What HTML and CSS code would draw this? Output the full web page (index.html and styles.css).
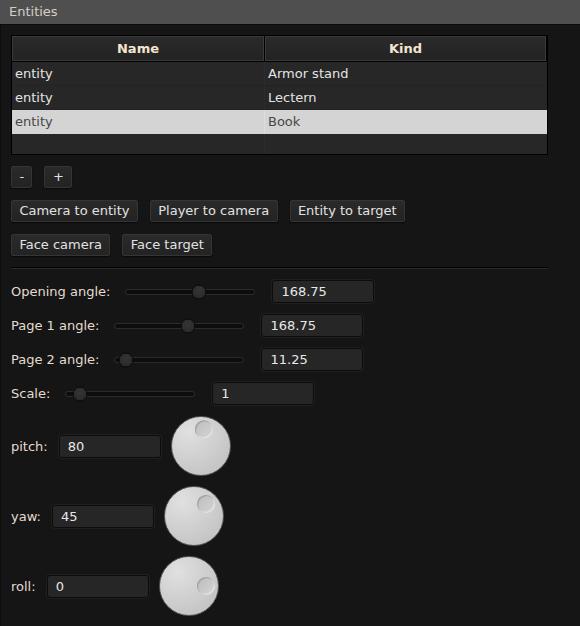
FILE: index.html
```html
<!DOCTYPE html>
<html>
<head>
<meta charset="utf-8">
<link rel="stylesheet" href="styles.css">
</head>
<body>
<div class="window">
  <div class="title">Entities</div>
  <div class="content">
    <div class="table">
      <div class="thead">
        <div class="th name">Name</div>
        <div class="th kind">Kind</div>
      </div>
      <div class="tbody">
        <div class="tr"><div class="td c1">entity</div><div class="td c2">Armor stand</div></div>
        <div class="tr"><div class="td c1">entity</div><div class="td c2">Lectern</div></div>
        <div class="tr sel"><div class="td c1">entity</div><div class="td c2">Book</div></div>
        <div class="tr"><div class="td c1"></div><div class="td c2"></div></div>
      </div>
    </div>

    <div class="btnrow first">
      <button class="btn">-</button>
      <button class="btn">+</button>
    </div>
    <div class="btnrow">
      <button class="btn">Camera to entity</button>
      <button class="btn">Player to camera</button>
      <button class="btn">Entity to target</button>
    </div>
    <div class="btnrow">
      <button class="btn">Face camera</button>
      <button class="btn">Face target</button>
    </div>

    <div class="sep"></div>

    <div class="srow first">
      <span class="lbl">Opening angle:</span>
      <div class="slider"><div class="track"><div class="thumb" style="left:56.6%"></div></div></div>
      <div class="tb">168.75</div>
    </div>
    <div class="srow">
      <span class="lbl">Page 1 angle:</span>
      <div class="slider"><div class="track"><div class="thumb" style="left:56.3%"></div></div></div>
      <div class="tb">168.75</div>
    </div>
    <div class="srow">
      <span class="lbl">Page 2 angle:</span>
      <div class="slider"><div class="track"><div class="thumb" style="left:8.6%"></div></div></div>
      <div class="tb">11.25</div>
    </div>
    <div class="srow">
      <span class="lbl">Scale:</span>
      <div class="slider"><div class="track"><div class="thumb" style="left:10.9%"></div></div></div>
      <div class="tb">1</div>
    </div>

    <div class="krow first">
      <span class="lbl">pitch:</span>
      <div class="tb">80</div>
      <div class="knob"><div class="dot" style="--a:-80deg"></div></div>
    </div>
    <div class="krow">
      <span class="lbl">yaw:</span>
      <div class="tb">45</div>
      <div class="knob"><div class="dot" style="--a:-45deg"></div></div>
    </div>
    <div class="krow">
      <span class="lbl">roll:</span>
      <div class="tb">0</div>
      <div class="knob"><div class="dot" style="--a:0deg"></div></div>
    </div>
  </div>
</div>
</body>
</html>
```

FILE: styles.css
```css
html, body {
  margin: 0;
  padding: 0;
  background: #151515;
  overflow: hidden;
}

body {
  font-family: "DejaVu Sans", "Liberation Sans", sans-serif;
  font-size: 13px;
}

.window {
  width: 580px;
  height: 626px;
  background: #151515;
}

.title {
  height: 24px;
  line-height: 24px;
  padding-left: 9px;
  background: #4f4f4f;
  color: #d6cfc6;
  border-bottom: 1px solid #0b0b0b;
}

.content {
  height: 601px;
  box-sizing: border-box;
  padding: 10px 0 0 10px;
  border-left: 1px solid #0c0c0c;
}

/* table */
.table {
  width: 537px;
  box-sizing: border-box;
  border: 1px solid #000;
  background: #272727;
}

.thead {
  display: flex;
  gap: 1px;
  padding: 0 1px 1px 0;
  background: #000;
}

.th {
  height: 25px;
  box-sizing: border-box;
  border: 1px solid #3a3a3a;
  background: linear-gradient(#2a2a2a, #232323);
  color: #f3e5d0;
  font-weight: bold;
  text-align: center;
  line-height: 23px;
}

.th.name { width: 252px; }
.th.kind { flex: 1; }

.tbody {
  height: 92px;
  overflow: hidden;
}

.tr {
  display: flex;
  height: 24px;
  box-sizing: border-box;
  border-bottom: 1px solid #232323;
  background: #272727;
  color: #e4e4e4;
}

.td {
  line-height: 23px;
  padding-left: 3px;
  box-sizing: border-box;
}

.c1 {
  width: 253px;
  border-right: 1px solid #2c2c2c;
}

.c2 { flex: 1; }

.tr.sel {
  background: #d4d4d4;
  color: #474747;
  border-bottom-color: #d4d4d4;
}

.tr.sel .c1 { border-right-color: #dedede; }

/* buttons */
.btnrow {
  display: flex;
  gap: 12px;
  margin-top: 12px;
}

.btnrow.first { margin-top: 11px; }

.btn {
  height: 22px;
  padding: 0 7.4px;
  margin: 0;
  border: 1px solid #353535;
  border-radius: 2px;
  background: linear-gradient(#2a2a2a, #232323);
  color: #e2e2e2;
  font-family: "DejaVu Sans", sans-serif;
  font-size: 13px;
  line-height: 20px;
  box-shadow: 0 1px 1px #090909;
}

.sep {
  width: 537px;
  height: 1px;
  margin-top: 11px;
  background: #000;
  border-bottom: 1px solid #2a2a2a;
}

/* sliders */
.lbl {
  color: #e3dbd0;
  white-space: nowrap;
}

.srow {
  display: flex;
  align-items: center;
  height: 23px;
  margin-top: 11px;
}

.srow.first { margin-top: 11px; }

.slider {
  width: 148px;
  height: 23px;
  margin-left: 6px;
  padding: 0 9px;
  box-sizing: border-box;
  display: flex;
  align-items: center;
}

.track {
  flex: 1;
  height: 6px;
  border-radius: 3px;
  background: #0d0d0d;
  box-shadow: inset 0 0 0 1px #2b2b2b;
  position: relative;
}

.thumb {
  position: absolute;
  top: 50%;
  width: 15px;
  height: 15px;
  box-sizing: border-box;
  border-radius: 50%;
  transform: translate(-50%, -50%);
  background: radial-gradient(circle at 50% 40%, #353535, #262626);
  border: 1px solid #0a0a0a;
}

.tb {
  width: 102px;
  height: 23px;
  margin-left: 8px;
  box-sizing: border-box;
  border: 1px solid #0c0c0c;
  border-radius: 3px;
  background: #262626;
  box-shadow: 0 0 0 1px #1f1f1f;
  color: #e8e8e8;
  padding-left: 8px;
  line-height: 21px;
}

/* knobs */
.krow {
  display: flex;
  align-items: center;
  height: 60px;
  margin-top: 10px;
}

.krow.first { margin-top: 11px; }

.krow .tb { margin-left: 11px; }

.knob {
  width: 60px;
  height: 60px;
  margin-left: 10px;
  box-sizing: border-box;
  border-radius: 50%;
  border: 1px solid #575757;
  background: radial-gradient(circle at 30% 25%, #e0e0e0, #d0d0d0 45%, #c2c2c2 85%, #b8b8b8);
  position: relative;
}

.dot {
  position: absolute;
  left: 50%;
  top: 50%;
  width: 18px;
  height: 18px;
  margin: -9px 0 0 -9px;
  border-radius: 50%;
  background: linear-gradient(135deg, #bdbdbd, #d4d4d4);
  box-shadow: inset 1px 1px 1px #9e9e9e, inset -1px -1px 1px #e6e6e6;
  transform: rotate(var(--a)) translateX(17px) rotate(calc(-1 * var(--a)));
}
```
